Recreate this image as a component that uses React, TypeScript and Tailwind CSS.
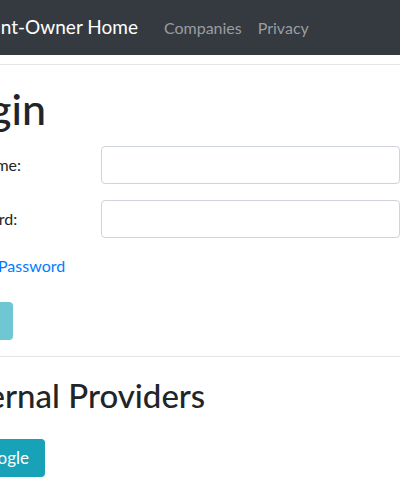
const font = { fontFamily: 'Lato, "Noto Sans", sans-serif' };

export default function App() {
  return (
    <div className="w-[400px] h-[484px] overflow-hidden bg-white" style={font}>
      {/* Navbar */}
      <header className="h-[55px] bg-[#343a40] flex items-center whitespace-nowrap">
        <span className="-ml-[51px] text-[19px] text-white">Account-Owner Home</span>
        <nav className="flex items-center gap-[16px] ml-[26px] text-[16px] text-[#9a9da1]">
          <a>Companies</a>
          <a>Privacy</a>
        </nav>
      </header>
      <div className="h-[10px] border-b border-[#e5e5e5]" />

      {/* Login form */}
      <main className="whitespace-nowrap text-[#212529]">
        <h1 className="-ml-[56px] mt-[20px] text-[43px] leading-[48px] font-medium">Login</h1>
        <div className="mt-[13px] flex flex-col gap-[16px]">
          <div className="flex items-center">
            <label className="w-[97px] -ml-[54px] text-[16px] shrink-0">Username:</label>
            <input className="ml-[58px] h-[38px] w-[400px] rounded-[4px] border border-[#ced4da]" />
          </div>
          <div className="flex items-center">
            <label className="w-[97px] -ml-[54px] text-[16px] shrink-0">Password:</label>
            <input type="password" className="ml-[58px] h-[38px] w-[400px] rounded-[4px] border border-[#ced4da]" />
          </div>
        </div>
        <a className="block mt-[16px] -ml-[52px] text-[16px] text-[#007bff]">Forgot Password</a>
        <button className="block mt-[24px] -ml-[57px] h-[38px] w-[70px] rounded-[4px] bg-[#6fc7d4] text-white text-[16px]">Login</button>
        <hr className="mt-[16px] border-t border-[#e5e5e5]" />
        <h2 className="-ml-[60px] mt-[18px] text-[33px] leading-[40px] font-medium">External Providers</h2>
        <button className="block mt-[24px] -ml-[55px] h-[38px] w-[100px] rounded-[4px] bg-[#17a2b8] text-white text-[17px] text-right pr-[16px]">Google</button>
      </main>
    </div>
  );
}
